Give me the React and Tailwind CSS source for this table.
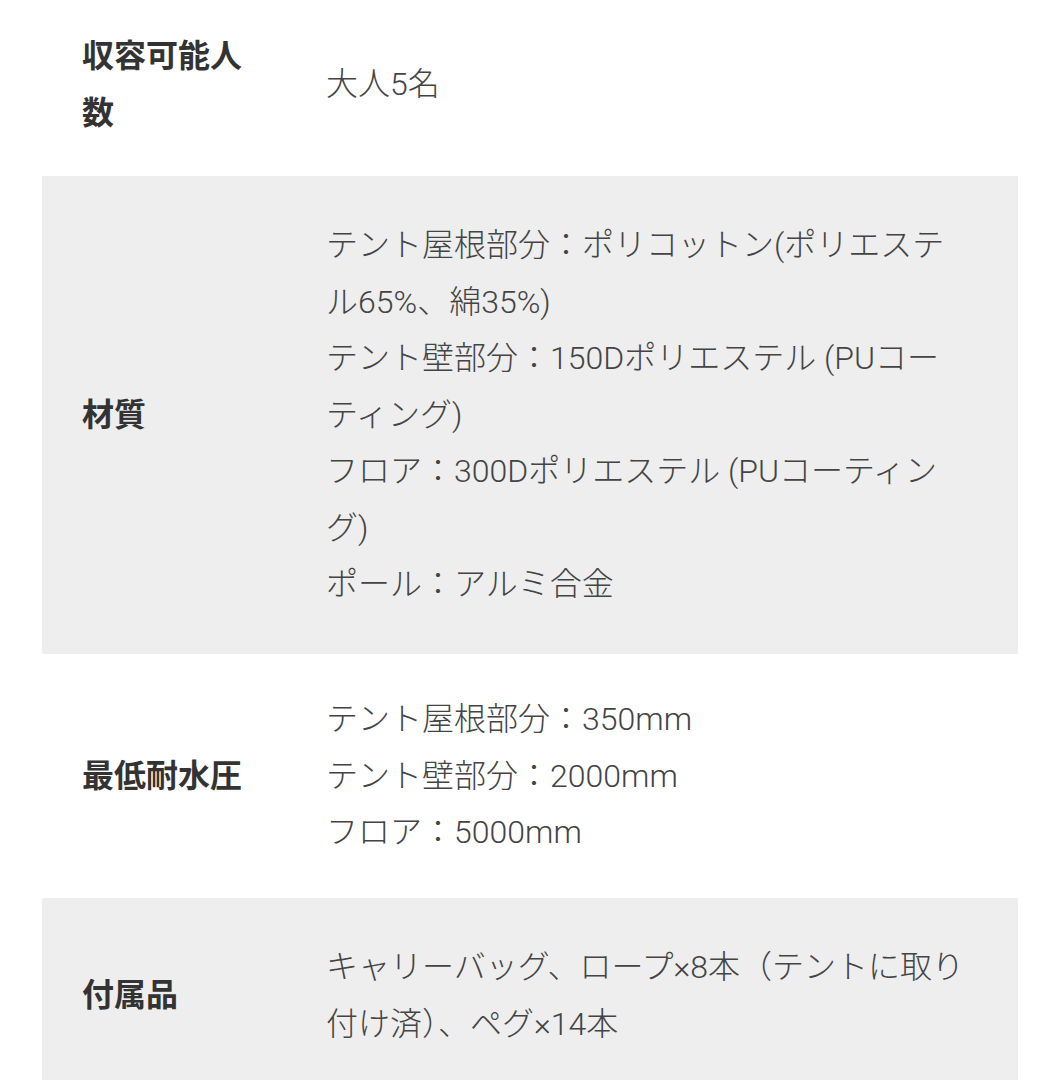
import React from "react"

const rows = [
  { label: "収容可能人数", value: ["大人5名"], bg: "bg-white", py: "py-[35px]" },
  {
    label: "材質",
    value: [
      "テント屋根部分：ポリコットン(ポリエステル65%、綿35%)",
      "テント壁部分：150Dポリエステル (PUコーティング)",
      "フロア：300Dポリエステル (PUコーティング)",
      "ポール：アルミ合金",
    ],
    bg: "bg-[#eeeeee]",
    py: "py-[41px]",
  },
  {
    label: "最低耐水圧",
    value: ["テント屋根部分：350mm", "テント壁部分：2000mm", "フロア：5000mm"],
    bg: "bg-white",
    py: "py-[37.5px]",
  },
  {
    label: "付属品",
    value: ["キャリーバッグ、ロープ×8本（テントに取り付け済）、ペグ×14本"],
    bg: "bg-[#eeeeee]",
    py: "py-[41px]",
  },
]

export default function App() {
  return (
    <div
      className="min-h-screen bg-white overflow-hidden"
      style={{ fontFamily: 'Roboto, "Noto Sans CJK JP", sans-serif' }}
    >
      <div className="mt-[-7px] ml-[42px] w-[976px]">
        {rows.map((row) => (
          <div key={row.label} className={`flex items-center ${row.bg} ${row.py}`}>
            <div className="w-[284px] shrink-0 pl-[40px]">
              <div className="w-[172px] text-[32px] leading-[56.5px] font-bold text-[#333333]">
                {row.label}
              </div>
            </div>
            <div className="w-[641px] text-[32px] leading-[56.5px] font-light text-[#444444] [line-break:strict]">
              {row.value.map((line) => (
                <p key={line}>{line}</p>
              ))}
            </div>
          </div>
        ))}
      </div>
    </div>
  )
}
